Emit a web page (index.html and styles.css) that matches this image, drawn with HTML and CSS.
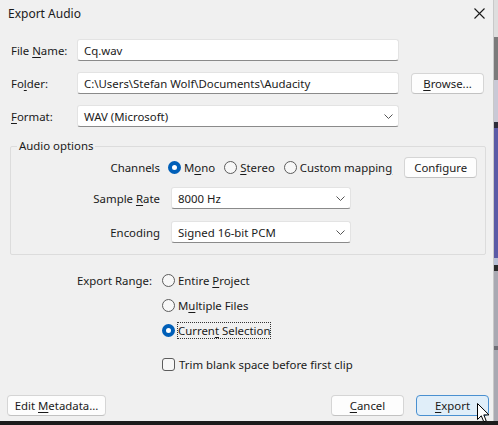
FILE: index.html
```html
<!DOCTYPE html>
<html lang="en">
<head>
    <meta charset="UTF-8">
    <meta name="viewport" content="width=device-width, initial-scale=1.0">
    <title>Export Audio</title>
    <link rel="stylesheet" href="styles.css">
</head>
<body>
    <div class="screen">
        <div class="desk">
            <div class="dialog">
                <div class="titlebar">
                    <span class="title">Export Audio</span>
                    <svg class="close" width="11" height="11" viewBox="0 0 11 11">
                        <path d="M0.5 0.5 L10.5 10.5 M10.5 0.5 L0.5 10.5" stroke="#1a1a1a" stroke-width="1.1" fill="none"/>
                    </svg>
                </div>

                <div class="fields">
                    <div class="field">
                        <span class="field-label">File <u>N</u>ame:</span>
                        <div class="input">Cq.wav</div>
                    </div>
                    <div class="field">
                        <span class="field-label">Fo<u>l</u>der:</span>
                        <div class="input">C:\Users\Stefan Wolf\Documents\Audacity</div>
                        <button class="btn browse"><u>B</u>rowse...</button>
                    </div>
                    <div class="field">
                        <span class="field-label"><u>F</u>ormat:</span>
                        <div class="input combo">
                            <span>WAV (Microsoft)</span>
                            <svg class="chevron" width="9" height="5" viewBox="0 0 9 5"><path d="M0.5 0.5 L4.5 4.5 L8.5 0.5" stroke="#555" fill="none"/></svg>
                        </div>
                    </div>
                </div>

                <fieldset class="group">
                    <legend>Audio options</legend>
                    <div class="opt-row channels">
                        <span class="opt-label">Channels</span>
                        <div class="radios">
                            <span class="radio on"></span><span class="radio-text">M<u>o</u>no</span>
                            <span class="radio"></span><span class="radio-text"><u>S</u>tereo</span>
                            <span class="radio"></span><span class="radio-text">Custom mappin<u>g</u></span>
                            <button class="btn configure">Configure</button>
                        </div>
                    </div>
                    <div class="opt-row rate">
                        <span class="opt-label">Sample <u>R</u>ate</span>
                        <div class="input combo small">
                            <span>8000 Hz</span>
                            <svg class="chevron" width="9" height="5" viewBox="0 0 9 5"><path d="M0.5 0.5 L4.5 4.5 L8.5 0.5" stroke="#555" fill="none"/></svg>
                        </div>
                    </div>
                    <div class="opt-row encoding">
                        <span class="opt-label">Encoding</span>
                        <div class="input combo small">
                            <span>Signed 16-bit PCM</span>
                            <svg class="chevron" width="9" height="5" viewBox="0 0 9 5"><path d="M0.5 0.5 L4.5 4.5 L8.5 0.5" stroke="#555" fill="none"/></svg>
                        </div>
                    </div>
                </fieldset>

                <div class="range">
                    <span class="range-label">Export Range:</span>
                    <div class="range-item"><span class="radio"></span><span>Entire <u>P</u>roject</span></div>
                    <span></span>
                    <div class="range-item"><span class="radio"></span><span>M<u>u</u>ltiple Files</span></div>
                    <span></span>
                    <div class="range-item"><span class="radio on"></span><span class="focused">Curren<u>t</u> Selection</span></div>
                    <span></span>
                    <div class="range-item trim"><span class="check"></span><span>Trim blank space before first clip</span></div>
                </div>

                <div class="footer">
                    <button class="btn metadata">Edit <u>M</u>etadata...</button>
                    <div class="footer-right">
                        <button class="btn"><u>C</u>ancel</button>
                        <button class="btn primary"><u>E</u>xport</button>
                    </div>
                </div>
            </div>
            <div class="backdrop"></div>
        </div>
        <div class="taskbar"></div>
        <svg class="cursor" width="13" height="21" viewBox="0 0 13 21">
            <path d="M0.5 0.5 L0.5 16.5 L4.3 12.8 L6.8 18.8 L9.2 17.8 L6.8 11.9 L12 11.9 Z" fill="#ffffff" stroke="#000000" stroke-width="1" stroke-linejoin="miter"/>
        </svg>
    </div>
</body>
</html>
```

FILE: styles.css
```css
html, body {
    margin: 0;
    padding: 0;
    background: #1f1f1f;
}
body {
    font-family: "Noto Sans", "DejaVu Sans", sans-serif;
    font-size: 11.4px;
    color: #1a1a1a;
}
u {
    text-underline-offset: 2px;
}
.screen {
    position: relative;
    width: 498px;
    height: 425px;
    display: flex;
    flex-direction: column;
}
.desk {
    display: flex;
    height: 421px;
}
.dialog {
    width: 493px;
    height: 421px;
    background: #f0f0f0;
    border-right: 1px solid #c9c9c9;
    display: flex;
    flex-direction: column;
}
.backdrop {
    width: 4px;
    background: linear-gradient(to bottom,
        #dedede 0, #dedede 37px,
        #7b7b7b 37px, #7b7b7b 80px,
        #c9c9d6 80px, #c9c9d6 122px,
        #2d2d3a 122px, #2d2d3a 128px,
        #5b5ba6 128px, #5b5ba6 258px,
        #b9c0d6 258px, #b9c0d6 265px,
        #2a2a2a 265px, #2a2a2a 271px,
        #a9a9b2 271px, #a9a9b2 346px,
        #6e6e76 346px, #6e6e76 350px,
        #a9a9b2 350px);
}
.taskbar {
    height: 4px;
    background: #1c1c1c;
}
.cursor {
    position: absolute;
    left: 477px;
    top: 403px;
}

.titlebar {
    height: 26px;
    display: flex;
    align-items: center;
    justify-content: space-between;
    padding: 0 8px 0 8px;
}
.title {
    font-size: 12px;
}

.fields {
    display: flex;
    flex-direction: column;
    gap: 11px;
    padding: 13px 0 0 11px;
}
.field {
    display: flex;
    align-items: center;
    height: 22px;
}
.field-label {
    width: 66px;
}
.input {
    width: 322px;
    height: 22px;
    box-sizing: border-box;
    background: #ffffff;
    border: 1px solid #e3e3e3;
    border-bottom-color: #8a8a8a;
    border-radius: 3px;
    padding: 0 6px;
    display: flex;
    align-items: center;
}
.combo {
    justify-content: space-between;
    padding-right: 5px;
}
.combo.small {
    width: 180px;
}
.chevron {
    display: block;
}

.btn {
    font-family: inherit;
    font-size: inherit;
    color: #1a1a1a;
    background: #fdfdfd;
    border: 1px solid #d5d5d5;
    border-bottom-color: #c2c2c2;
    border-radius: 4px;
    height: 21px;
    padding: 0;
    width: 73px;
}
.browse {
    margin-left: 12px;
}

.group {
    margin: 11px 0 0 10px;
    width: 476px;
    box-sizing: border-box;
    border: 1px solid #dcdcdc;
    border-radius: 2px;
    padding: 3px 0 11px 0;
    min-width: 0;
}
.group legend {
    margin-left: 6px;
    padding: 0 2px;
    line-height: 16px;
}
.opt-row {
    display: flex;
    align-items: center;
}
.opt-label {
    width: 149px;
    text-align: right;
    margin-right: 8px;
}
.channels {
    height: 20px;
}
.rate {
    margin-top: 10px;
}
.encoding {
    margin-top: 12px;
}
.opt-row .combo {
    margin-left: 3px;
}
.radios {
    display: flex;
    align-items: center;
}
.radio {
    width: 13px;
    height: 13px;
    box-sizing: border-box;
    border: 1px solid #5c5c5c;
    border-radius: 50%;
    background: #f7f7f7;
    flex: none;
}
.radio.on {
    border: 4px solid #005fb8;
    background: #ffffff;
}
.radio-text {
    margin: 0 9px 0 3px;
}
.configure {
    margin-left: 3px;
}

.range {
    display: grid;
    grid-template-columns: 152px 1fr;
    column-gap: 10px;
    grid-auto-rows: 25px;
    margin-top: 13px;
}
.range-label {
    text-align: right;
    align-self: center;
}
.range-item {
    display: flex;
    align-items: center;
    gap: 3px;
}
.range-item.trim {
    margin-top: 17px;
}
.focused {
    outline: 1px dotted #333;
    outline-offset: 0;
}
.check {
    width: 13px;
    height: 13px;
    box-sizing: border-box;
    border: 1px solid #5c5c5c;
    border-radius: 3px;
    background: #f7f7f7;
    margin-right: 1px;
}

.footer {
    display: flex;
    justify-content: space-between;
    margin-top: 27px;
    padding: 0 4px 0 7px;
}
.metadata {
    width: 99px;
}
.footer-right {
    display: flex;
    gap: 12px;
}
.primary {
    background: #e0eef9;
    border-color: #4a90d0;
}
```
